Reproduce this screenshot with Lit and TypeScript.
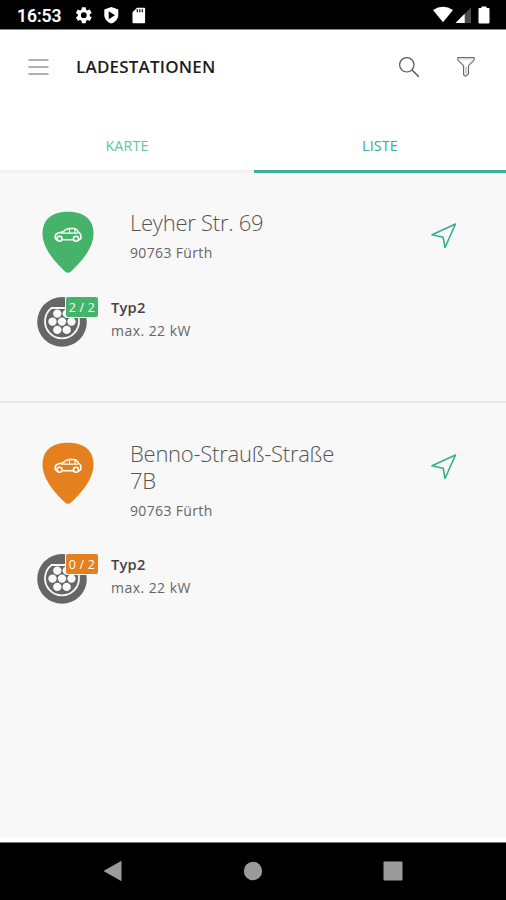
import { LitElement, html, css, svg } from "lit";
import { customElement, property } from "lit/decorators.js";

type Tone = "free" | "busy";

interface Station {
  name: string[];
  city: string;
  tone: Tone;
  slots: string;
  plug: string;
  power: string;
}

const stations: Station[] = [
  { name: ["Leyher Str. 69"], city: "90763 Fürth", tone: "free", slots: "2 / 2", plug: "Typ2", power: "max. 22 kW" },
  { name: ["Benno-Strauß-Straße", "7B"], city: "90763 Fürth", tone: "busy", slots: "0 / 2", plug: "Typ2", power: "max. 22 kW" },
];

@customElement("status-bar")
class StatusBar extends LitElement {
  static styles = css`
    :host { display: flex; height: 29px; background: #000; border-bottom: 1px solid #858585; box-sizing: content-box; color: #fff; }
    .time { font: 500 17.500px/32px Roboto, sans-serif; margin-left: 17px; width: 59px; -webkit-text-stroke: 0.2px #fff; }
    svg { display: block; fill: #fff; }
    .left { flex: 1; }
  `;
  render() {
    return html`
      <div class="time">16:53</div>
      <svg class="left" width="100" height="29" viewBox="76 0 354 29" preserveAspectRatio="xMinYMin slice">
        <g transform="translate(74.2 5.6) scale(.8)"><path d="M19.4 13a7.500 7.500 0 0 0 0-2l2.100-1.650a.5.5 0 0 0 .12-.64l-2-3.460a.5.5 0 0 0-.61-.22l-2.490 1a7.300 7.300 0 0 0-1.690-.98l-.38-2.650A.49.49 0 0 0 14 2h-4a.49.49 0 0 0-.49.42l-.38 2.650c-.61.25-1.170.59-1.690.98l-2.490-1a.49.49 0 0 0-.61.22l-2 3.460a.49.49 0 0 0 .12.64L4.570 11a7.900 7.900 0 0 0 0 2l-2.110 1.650a.5.5 0 0 0-.12.64l2 3.460c.12.22.39.3.61.22l2.490-1c.52.4 1.080.73 1.690.98l.38 2.650c.03.24.24.42.49.42h4c.25 0 .46-.18.49-.42l.38-2.650c.61-.25 1.170-.59 1.690-.98l2.490 1c.23.09.49 0 .61-.22l2-3.460a.5.5 0 0 0-.12-.64zM12 15.600a3.600 3.600 0 1 1 0-7.200 3.600 3.600 0 0 1 0 7.200z"/></g>
        <path d="M111.300 7l7 2.500v5.500c0 4-3 7-7 8.600-4-1.600-7-4.600-7-8.600V9.500z"/>
        <path d="M108.700 11.300l6.300 4-6.300 4z" fill="#000"/>
        <path fill-rule="evenodd" d="M137 7.700h7.200q.9 0 .9.900v13.600q0 1-.9 1h-10.700q-1 0-1-1V12.200zM136.700 9.300v3h1.200v-3zm2.500 0v3h1.200v-3zm2.500 0v3h1.200v-3z"/>
      </svg>
      <svg width="76" height="29" viewBox="430 0 76 29">
        <path d="M433 10q10-6.600 20 0l-10 12.300z"/>
        <path d="M471 7.500v15.500h-15.500z" fill="#4a4a4a"/>
        <path d="M464.700 13.800v9.200h-9.200z"/>
        <path d="M481.500 6.500h5V8h2.200q.8 0 .8.800v13.800q0 .8-.8.800h-9.400q-.8 0-.8-.8V8.800q0-.8.800-.8h2.200z"/>
      </svg>`;
  }
}

@customElement("top-bar")
class TopBar extends LitElement {
  static styles = css`
    :host { display: flex; align-items: center; height: 74px; padding: 0 28px; background: #fff; box-sizing: border-box; }
    svg { display: block; fill: none; }
    h1 { margin: 0 0 0 27px; flex: 1; font: 600 17px/24px "Open Sans", sans-serif; letter-spacing: 0.2px; color: #1d1d1d; }
    .filter { margin-left: 36px; margin-right: 2px; }
  `;
  render() {
    return html`
      <svg width="21" height="18" stroke="#b0b0b0" stroke-width="2.200"><path d="M.5 2h20M.5 9h20M.5 16h20"/></svg>
      <h1>LADESTATIONEN</h1>
      <svg width="22" height="22" stroke="#555" stroke-width="1.200"><circle cx="8.800" cy="8.800" r="7.200"/><path d="M14 14l6.800 6.800" stroke-width="1.500"/></svg>
      <svg class="filter" width="20" height="22" stroke="#6b6b6b" stroke-width="1.100" stroke-linejoin="round"><path d="M10 10.500v8" stroke="#d5d5d5" stroke-width="3"/><path d="M2 2.600h16" stroke="#d5d5d5" stroke-width="2"/><path d="M1.800 1.500h16.400q.6 1.700-.4 2.900l-5.300 5.200v8.200L9.500 20.300 7.500 18.800V9.600L2.200 4.400q-1-1.200-.4-2.900z"/></svg>`;
  }
}

@customElement("tab-strip")
class TabStrip extends LitElement {
  static styles = css`
    :host { display: grid; grid-template-columns: 254px 1fr; height: 69px; background: #fff; }
    .tab { box-sizing: border-box; text-align: center; padding-top: 31px; font: 400 14.400px/22px "Open Sans", sans-serif; letter-spacing: 0.1px; color: #5cc5a2; border-bottom: 3px solid #f1f1f1; }
    .active { color: #33b08c; border-bottom-color: #3fae97; }
  `;
  render() {
    return html`<div class="tab">KARTE</div><div class="tab active">LISTE</div>`;
  }
}

@customElement("station-card")
class StationCard extends LitElement {
  @property({ attribute: false }) station!: Station;
  static styles = css`
    :host { display: block; padding: 38px 0 54px 36px; font-family: "Open Sans", sans-serif; color: #666; }
    svg { display: block; }
    .head { display: grid; grid-template-columns: 94px 1fr 76px; }
    .pin { margin: 0 0 0 6px; }
    .free { --tone: #46b36a; }
    .busy { --tone: #e5801f; }
    .name { font-weight: 300; font-size: 22px; line-height: 27px; margin-top: -2px; color: #555; letter-spacing: -0.250px; }
    .city { font-size: 14px; line-height: 20px; margin-top: 7px; letter-spacing: 0.350px; }
    .arrow { margin-top: 11px; }
    .plugrow { display: flex; margin-top: 24px; height: 52px; }
    .short { margin-top: 33px; }
    .plug { position: relative; width: 75px; }
    .badge { position: absolute; left: 30px; top: 0; width: 32px; height: 20px; border-radius: 2px; background: var(--tone); color: #fff; font-size: 12.500px; font-weight: 500; line-height: 21px; text-align: center; box-shadow: 0 0 0 1px #f8f8f8; letter-spacing: 0.2px; }
    .type { font-size: 14.700px; font-weight: 600; line-height: 20px; letter-spacing: 0.2px; color: #444; }
    .power { font-size: 14px; line-height: 22px; margin-top: 3px; letter-spacing: 0.450px; }
  `;
  render() {
    const s = this.station;
    const pins = [[21.300, 16.600], [30.700, 16.600], [16.500, 24.600], [26, 24.600], [35.500, 24.600], [21.300, 32.900], [30.700, 32.900]];
    return html`
      <div class=${s.tone}>
        <div class="head">
          <svg class="pin" width="52" height="62" viewBox="0 0 52 62">
            <path fill="var(--tone)" d="M26 .8C41 .8 51.500 7.500 51.500 22.500c0 15-13 29-22.500 38q-3 2.400-6 0C13.500 51.500.5 37.500.5 22.500.5 7.500 11 .8 26 .8z"/>
            <g fill="none" stroke="#fff" stroke-width="1.600" stroke-linejoin="round" transform="translate(0 .8)">
              <path d="M16.500 28h-2q-1.400-.3-1.400-2.500 0-3.500 3-4.300l5-1.200q3-3.300 6-3.300h4.500q3 0 4.700 3.500l1.500 1.300q1.200 1 1.200 3.500 0 2.500-1.500 3h-1.500M20.500 28h11.500"/>
              <path d="M19 21.300h17M27.500 17v4M33 17v4" stroke-width="1.200"/>
              <circle cx="17.500" cy="27" r="2.500"/><circle cx="34" cy="27" r="2.500"/>
            </g>
          </svg>
          <div>
            <div class="name">${s.name.map((l) => html`<div>${l}</div>`)}</div>
            <div class="city">${s.city}</div>
          </div>
          <svg class="arrow" width="28" height="28" viewBox="0 0 28 28"><path fill="none" stroke="#35ae8c" stroke-width="1.600" stroke-linejoin="round" d="M2 12.700L25.500 2 15 25.500l-1.800-10.200z"/></svg>
        </div>
        <div class="plugrow ${s.name.length > 1 ? "short" : ""}">
          <div class="plug">
            <svg width="52" height="52" viewBox="0 0 52 52">
              <circle cx="26" cy="24.900" r="24.800" fill="#666"/>
              <path d="M15.500 11h21a17 17 0 1 1-21 0z" fill="#666" stroke="#f8f8f8" stroke-width="1.800" stroke-linejoin="round"/>
              ${pins.map(([x, y]) => svg`<circle cx=${x} cy=${y} r="4.200" fill="#f8f8f8"/>`)}
            </svg>
            <div class="badge">${s.slots}</div>
          </div>
          <div>
            <div class="type">${s.plug}</div>
            <div class="power">${s.power}</div>
          </div>
        </div>
      </div>`;
  }
}

@customElement("nav-bar")
class NavBar extends LitElement {
  static styles = css`
    :host { display: grid; grid-template-columns: repeat(3, 140px); justify-content: center; align-items: center; justify-items: center; height: 58px; background: #000; border-top: 1px solid #777; box-sizing: border-box; padding-bottom: 2px; }
    svg { display: block; fill: #9b9b9b; }
  `;
  render() {
    return html`
      <svg width="20" height="22"><path d="M.5 11L18.500.7v20.600z"/></svg>
      <svg width="20" height="20"><circle cx="10" cy="10" r="9.200"/></svg>
      <svg width="20" height="20"><rect x=".5" y=".5" width="19" height="19" rx="1"/></svg>`;
  }
}

@customElement("app-root")
class AppRoot extends LitElement {
  static styles = css`
    :host { display: flex; flex-direction: column; width: 506px; height: 900px; background: #f8f8f8; overflow: hidden; }
    .list { flex: 1; border-bottom: 4px solid #fff; }
    .first { height: 136px; border-bottom: 2px solid #e6e6e6; margin-bottom: 1px; }
  `;
  render() {
    return html`
      <status-bar></status-bar>
      <top-bar></top-bar>
      <tab-strip></tab-strip>
      <div class="list">
        ${stations.map((s, i) => html`<station-card class=${i === 0 ? "first" : ""} .station=${s}></station-card>`)}
      </div>
      <nav-bar></nav-bar>`;
  }
}
